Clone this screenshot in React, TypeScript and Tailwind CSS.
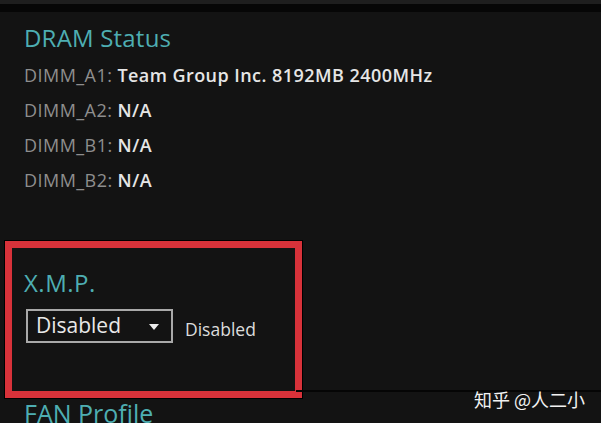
export default function App() {
  const dimms = [
    { slot: "DIMM_A1", value: "Team Group Inc. 8192MB 2400MHz" },
    { slot: "DIMM_A2", value: "N/A" },
    { slot: "DIMM_B1", value: "N/A" },
    { slot: "DIMM_B2", value: "N/A" },
  ];

  return (
    <div className="w-[601px] h-[423px] overflow-hidden bg-[#131313] font-['Open_Sans',sans-serif] flex flex-col">
      {/* top strip */}
      <div className="h-[4px] shrink-0 bg-[#1e1e1e]" />
      <div className="h-[8px] shrink-0 bg-[#060606]" />

      <div className="relative flex-1 min-h-0 overflow-hidden pl-[24px]">
        <h2 className="text-[24px] leading-none text-[#4eaeb2] mt-[14px] tracking-[0.2px]">DRAM Status</h2>

        <div className="mt-[14px] flex flex-col gap-[14px]">
          {dimms.map((d) => (
            <div key={d.slot} className="h-[21px] flex items-center text-[18px] leading-none tracking-[0.45px]">
              <span className="text-[#8e8e8e]">{d.slot}:</span>
              <span className="ml-[5px] text-[#e6e6e6] font-semibold">{d.value}</span>
            </div>
          ))}
        </div>

        {/* highlighted X.M.P. section */}
        <div className="-ml-[19px] mt-[51px] w-[297px] h-[157px] border-[7px] border-[#d8323a] shadow-[0_0_0_1px_#000] pl-[12px] pt-[23px]">
          <h3 className="text-[24px] leading-none text-[#4eaeb2] tracking-[0.5px]">X.M.P.</h3>
          <div className="mt-[14px] flex items-center">
            <div className="ml-[2px] w-[147px] h-[34px] border-2 border-[#a9a9a9] flex items-center justify-between pl-[8px] pr-[12px]">
              <span className="text-[21px] text-[#e8e8e8]">Disabled</span>
              <svg width="10" height="6" viewBox="0 0 10 6" className="mt-[1px]">
                <path d="M0 0H10L5 6Z" fill="#ededed" />
              </svg>
            </div>
            <span className="ml-[12px] mt-[6px] text-[17.5px] text-[#dcdcdc]">Disabled</span>
          </div>
        </div>

        <h2 className="mt-[3px] text-[25px] leading-none text-[#4eaeb2]">FAN Profile</h2>

        <div className="absolute left-[296px] right-0 top-[378px] h-[2px] bg-[#050505]" />
        <div className="absolute left-[474px] top-[378px] text-[18px] leading-[18px] text-[#f2f2f2] font-['Noto_Sans_CJK_SC',sans-serif]">
          知乎 @人二小
        </div>
      </div>
    </div>
  );
}
